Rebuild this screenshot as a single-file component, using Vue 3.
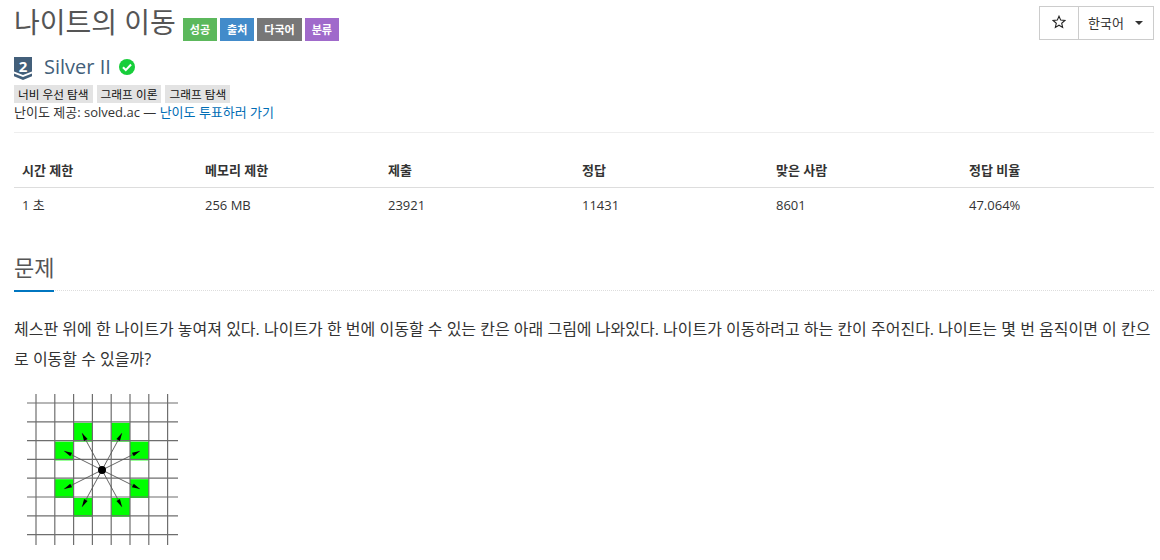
<script setup>
const tags = ['너비 우선 탐색', '그래프 이론', '그래프 탐색']
const labels = [
  { text: '성공', cls: 'green' },
  { text: '출처', cls: 'blue' },
  { text: '다국어', cls: 'gray' },
  { text: '분류', cls: 'purple' },
]
const head = ['시간 제한', '메모리 제한', '제출', '정답', '맞은 사람', '정답 비율']
const row = ['1 초', '256 MB', '23921', '11431', '8601', '47.064%']
const gridPos = [9, 27.8, 46.6, 65.4, 84.2, 103, 121.8, 140.6]
const cells = [[46.6, 28.8], [84.2, 28.8], [27.8, 47.6], [103, 47.6], [27.8, 85.2], [103, 85.2], [46.6, 104], [84.2, 104]]
const c = { x: 75, y: 76 }
const tips = [[55, 39], [95, 39], [37, 57], [113, 57], [37, 95], [113, 95], [55, 113], [95, 113]]
function arrowHead(t) {
  const dx = t[0] - c.x, dy = t[1] - c.y
  const l = Math.hypot(dx, dy)
  const ux = dx / l, uy = dy / l
  const bx = t[0] - ux * 8, by = t[1] - uy * 8
  return `${t[0]},${t[1]} ${bx - uy * 2},${by + ux * 2} ${bx + uy * 2},${by - ux * 2}`
}
</script>

<template>
  <div class="page">
    <div class="title-row">
      <div class="title-left">
        <h1 class="title">나이트의 이동</h1>
        <div class="labels">
          <span v-for="l in labels" :key="l.text" class="label" :class="l.cls">{{ l.text }}</span>
        </div>
      </div>
      <div class="btn-group">
        <button class="btn star">
          <svg width="14" height="14" viewBox="0 0 14 14">
            <path d="M7 1.2l1.7 3.9 4.2.4-3.2 2.8.95 4.1L7 10.2l-3.65 2.2.95-4.1L1.1 5.5l4.2-.4z" fill="none" stroke="#222" stroke-width="1.1" stroke-linejoin="miter" />
          </svg>
        </button>
        <button class="btn lang">한국어<span class="caret"></span></button>
      </div>
    </div>

    <div class="tier-row">
      <div class="shield">
        <svg class="shield-art" width="20" height="24" viewBox="0 0 20 24">
          <path d="M1 0h18v14.5l-9 3.5-9-3.5z" fill="#435f7a" />
          <path d="M1 16.5l9 3.5 9-3.5v2.8l-9 3.7-9-3.7z" fill="#435f7a" />
        </svg>
        <span class="tier-num">2</span>
      </div>
      <span class="tier-name">Silver II</span>
      <svg class="check" width="16" height="16" viewBox="0 0 17 17">
        <circle cx="8.5" cy="8.5" r="8.5" fill="#17ce3a" />
        <path d="M4.2 8.8l3 3 5.6-6" fill="none" stroke="#fff" stroke-width="2.2" />
      </svg>
    </div>

    <div class="tags">
      <span v-for="t in tags" :key="t" class="tag">{{ t }}</span>
    </div>
    <div class="credit">난이도 제공: solved.ac — <a class="link">난이도 투표하러 가기</a></div>

    <div class="divider"></div>

    <div class="stats">
      <div v-for="h in head" :key="h" class="th">{{ h }}</div>
      <div v-for="r in row" :key="r" class="td">{{ r }}</div>
    </div>

    <div class="headline"><h2>문제</h2></div>

    <p class="desc">체스판 위에 한 나이트가 놓여져 있다. 나이트가 한 번에 이동할 수 있는 칸은 아래 그림에 나와있다. 나이트가 이동하려고 하는 칸이 주어진다. 나이트는 몇 번 움직이면 이 칸으로 이동할 수 있을까?</p>

    <svg class="figure" width="153" height="153" viewBox="0 0 153 153">
      <rect v-for="(p, i) in cells" :key="'c' + i" :x="p[0]" :y="p[1]" width="18.8" height="18.8" fill="#00ff00" />
      <line v-for="p in gridPos" :key="'v' + p" :x1="p" :x2="p" y1="0" y2="151" stroke="#6e6e6e" stroke-width="1.2" />
      <line v-for="p in gridPos" :key="'h' + p" x1="0" x2="151" :y1="p" :y2="p" stroke="#6e6e6e" stroke-width="1.2" />
      <line v-for="(t, i) in tips" :key="'a' + i" :x1="c.x" :y1="c.y" :x2="t[0]" :y2="t[1]" stroke="#555" stroke-width="0.9" />
      <polygon v-for="(t, i) in tips" :key="'p' + i" :points="arrowHead(t)" fill="#000" />
      <circle :cx="c.x" :cy="c.y" r="4" fill="#000" />
    </svg>
  </div>
</template>

<style>
html, body { margin: 0; background: #fff; overflow: hidden; }
</style>

<style scoped>
.page {
  width: 1140px;
  height: 560px;
  padding: 0 6px 0 14px;
  font-family: "Open Sans", "Noto Sans CJK KR", sans-serif;
  font-size: 13px;
  line-height: 19px;
  color: #333;
  overflow: hidden;
}
.title-row {
  display: flex;
  justify-content: space-between;
  align-items: flex-start;
  height: 51px;
}
.title-left { display: flex; align-items: flex-start; }
.title {
  margin: 0;
  font-size: 28px;
  font-weight: 400;
  line-height: 44px;
  color: #555;
}
.labels { display: flex; gap: 3px; margin: 18px 0 0 7px; }
.label {
  height: 23px;
  padding: 0 7px;
  font-size: 11px;
  font-weight: 700;
  line-height: 23px;
  color: #fff;
}
.green { background: #5cb85c; }
.blue { background: #428bca; }
.gray { background: #777; }
.purple { background: #a06acb; }
.btn-group { display: flex; margin-top: 6px; }
.btn {
  height: 34px;
  box-sizing: border-box;
  background: #fff;
  border: 1px solid #ccc;
  font-family: inherit;
  font-size: 13px;
  color: #333;
  padding: 0 0 2px;
}
.star { width: 40px; display: flex; align-items: center; justify-content: center; }
.lang { width: 76px; margin-left: -1px; display: flex; align-items: center; padding-left: 9px; }
.caret {
  margin-left: 11px;
  margin-top: 2px;
  border-top: 4px solid #333;
  border-left: 4px solid transparent;
  border-right: 4px solid transparent;
}
.tier-row { display: flex; align-items: center; height: 32px; }
.shield { position: relative; flex: none; width: 20px; height: 24px; margin: 3px 0 0 -1px; }
.shield-art { display: block; }
.tier-num {
  position: absolute;
  inset: 0 0 6px;
  text-align: center;
  font-size: 15px;
  line-height: 19px;
  font-weight: 700;
  color: #fff;
}
.tier-name { margin-left: 11px; font-size: 20px; line-height: 32px; color: #435f7a; }
.check { margin-left: 8px; }
.tags { display: flex; gap: 4px; height: 18px; margin-top: 1px; padding-top: 1px; }
.tag {
  padding: 0 4px;
  background: #e3e3e3;
  font-size: 11.7px;
  line-height: 18px;
  height: 18px;
  color: #111;
}
.credit { height: 19px; margin-top: 0; font-size: 13px; }
.link { color: #006db5; }
.divider { border-top: 1px solid #eee; margin-top: 10px; }
.stats {
  display: grid;
  grid-template-columns: 183px 183px 194px 194px 193px 1fr;
  margin-top: 18px;
}
.th {
  padding: 9px 8px 7px;
  height: 20px;
  line-height: 20px;
  font-weight: 700;
  font-size: 13px;
  color: #333;
  border-bottom: 1px solid #ddd;
}
.td {
  padding: 7px 8px;
  line-height: 20px;
  font-size: 13px;
  color: #333;
}
.headline {
  margin-top: 24px;
  height: 44px;
  border-bottom: 1px dotted #ddd;
}
.headline h2 {
  margin: 0;
  height: 44px;
  width: 40px;
  white-space: nowrap;
  font-size: 22px;
  font-weight: 400;
  line-height: 42px;
  color: #555;
  border-bottom: 2px solid #0076c0;
}
.desc {
  margin: 23px 0 0;
  font-size: 16px;
  line-height: 30px;
  color: #333;
}
.figure { display: block; margin: 20px 0 0 13px; }
</style>
